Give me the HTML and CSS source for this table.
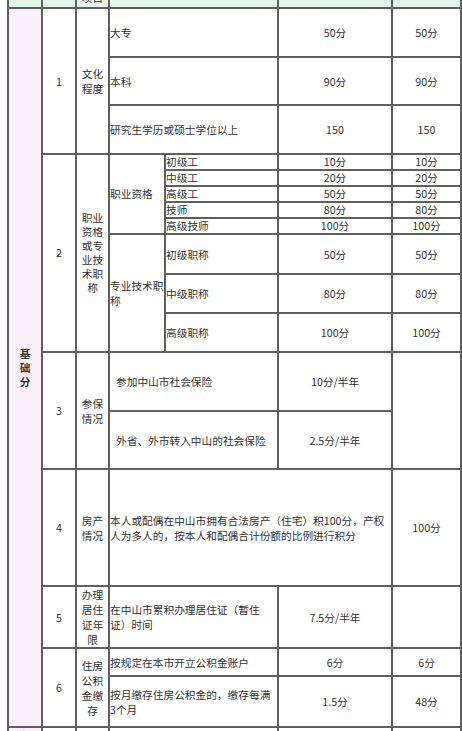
FILE: index.html
```html
<!DOCTYPE html>
<html lang="zh">
<head>
<meta charset="utf-8">
<link rel="stylesheet" href="styles.css">
</head>
<body>
<div class="viewport">
<table class="score">
  <colgroup>
    <col class="c-a"><col class="c-b"><col class="c-c"><col class="c-d1"><col class="c-d2"><col class="c-e"><col class="c-f"><col class="c-g">
  </colgroup>
  <tr class="head">
    <td>类别</td><td>序号</td><td>指标项目</td><td colspan="2">指标及分值</td><td>分值</td><td>最高分</td><td class="note">备注说明</td>
  </tr>
  <tr class="h49">
    <td class="cat" rowspan="17">基<br>础<br>分</td>
    <td rowspan="3">1</td>
    <td rowspan="3">文化程度</td>
    <td class="l" colspan="2">大专</td>
    <td>50分</td><td>50分</td>
    <td class="note" rowspan="3">学历须经教育部门认证</td>
  </tr>
  <tr class="h48"><td class="l" colspan="2">本科</td><td>90分</td><td>90分</td></tr>
  <tr class="h49"><td class="l" colspan="2">研究生学历或硕士学位以上</td><td>150</td><td>150</td></tr>

  <tr class="h16">
    <td rowspan="8">2</td>
    <td rowspan="8">职业资格或专业技术职称</td>
    <td class="l t" rowspan="5">职业资格</td>
    <td class="l">初级工</td><td>10分</td><td>10分</td>
    <td class="note" rowspan="5">同一人取得多项的不累计</td>
  </tr>
  <tr class="h16"><td class="l">中级工</td><td>20分</td><td>20分</td></tr>
  <tr class="h16"><td class="l">高级工</td><td>50分</td><td>50分</td></tr>
  <tr class="h16"><td class="l">技师</td><td>80分</td><td>80分</td></tr>
  <tr class="h16"><td class="l">高级技师</td><td>100分</td><td>100分</td></tr>
  <tr class="h40">
    <td class="l t" rowspan="3">专业技术职称</td>
    <td class="l">初级职称</td><td>50分</td><td>50分</td>
    <td class="note" rowspan="3">须经人事部门认定</td>
  </tr>
  <tr class="h39"><td class="l">中级职称</td><td>80分</td><td>80分</td></tr>
  <tr class="h39"><td class="l">高级职称</td><td>100分</td><td>100分</td></tr>

  <tr class="h59">
    <td rowspan="2">3</td>
    <td rowspan="2">参保情况</td>
    <td class="l ind" colspan="2">参加中山市社会保险</td>
    <td>10分/半年</td>
    <td rowspan="2"></td>
    <td class="note" rowspan="2">按实际缴费年限计算</td>
  </tr>
  <tr class="h58"><td class="l ind" colspan="2">外省、外市转入中山的社会保险</td><td>2.5分/半年</td></tr>

  <tr class="h117">
    <td>4</td>
    <td>房产情况</td>
    <td class="l" colspan="3">本人或配偶在中山市拥有合法房产（住宅）积100分，产权人为多人的，按本人和配偶合计份额的比例进行积分</td>
    <td>100分</td>
    <td class="note">以房产证登记为准</td>
  </tr>

  <tr class="h60">
    <td>5</td>
    <td>办理居住证年限</td>
    <td class="l" colspan="2">在中山市累积办理居住证（暂住证）时间</td>
    <td>7.5分/半年</td>
    <td></td>
    <td class="note">以登记时间为准</td>
  </tr>

  <tr class="h28">
    <td rowspan="2">6</td>
    <td rowspan="2">住房公积金缴存</td>
    <td class="l" colspan="2">按规定在本市开立公积金账户</td>
    <td>6分</td><td>6分</td>
    <td class="note" rowspan="2">按实际缴存计算</td>
  </tr>
  <tr class="h51"><td class="l" colspan="2">按月缴存住房公积金的，缴存每满3个月</td><td>1.5分</td><td>48分</td></tr>

  <tr class="h30 next">
    <td class="cat2">附加分</td><td>7</td><td>计划生育</td><td class="l" colspan="2">符合计划生育政策</td><td>20分</td><td>20分</td><td class="note">须提供证明</td>
  </tr>
</table>
</div>
</body>
</html>
```
FILE: styles.css
```css
html, body {
  margin: 0;
  padding: 0;
  background: #ffffff;
}
.viewport {
  width: 462px;
  height: 731px;
  overflow: hidden;
}
.score {
  margin-top: -29px;
  margin-left: 7px;
  border-collapse: collapse;
  table-layout: fixed;
  width: 555px;
  font-family: "Noto Sans CJK SC", "Microsoft YaHei", sans-serif;
  font-size: 10.7px;
  line-height: 15px;
  color: #333333;
  text-spacing-trim: space-all;
}
.c-a { width: 34px; }
.c-b { width: 34px; }
.c-c { width: 33px; }
.c-d1 { width: 56px; }
.c-d2 { width: 113px; }
.c-e { width: 114px; }
.c-f { width: 69px; }
.c-g { width: 102px; }
.score td {
  border: 2px solid #5f5f5f;
  padding: 0 1px;
  text-align: center;
  vertical-align: middle;
  overflow: hidden;
}
.score td.l {
  text-align: left;
  padding-left: 0;
  padding-right: 1px;
}
.score td.t {
  padding-right: 0;
}
.score td.ind {
  padding-left: 6px;
}
.head td {
  background: #e3f6e7;
  height: 34px;
}
.cat, .cat2 {
  background: #faf0fa;
  font-weight: bold;
  line-height: 14px;
}
.score td.note {
  color: #a0522d;
  text-align: left;
}
.h16 { height: 16px; }
.h16 td { line-height: 14px; }
.h28 { height: 28px; }
.h30 { height: 30px; }
.h39 { height: 39px; }
.h40 { height: 40px; }
.h48 { height: 48px; }
.h49 { height: 49px; }
.h51 { height: 51px; }
.h58 { height: 58px; }
.h59 { height: 59px; }
.h60 { height: 60px; }
.h117 { height: 117px; }
```
